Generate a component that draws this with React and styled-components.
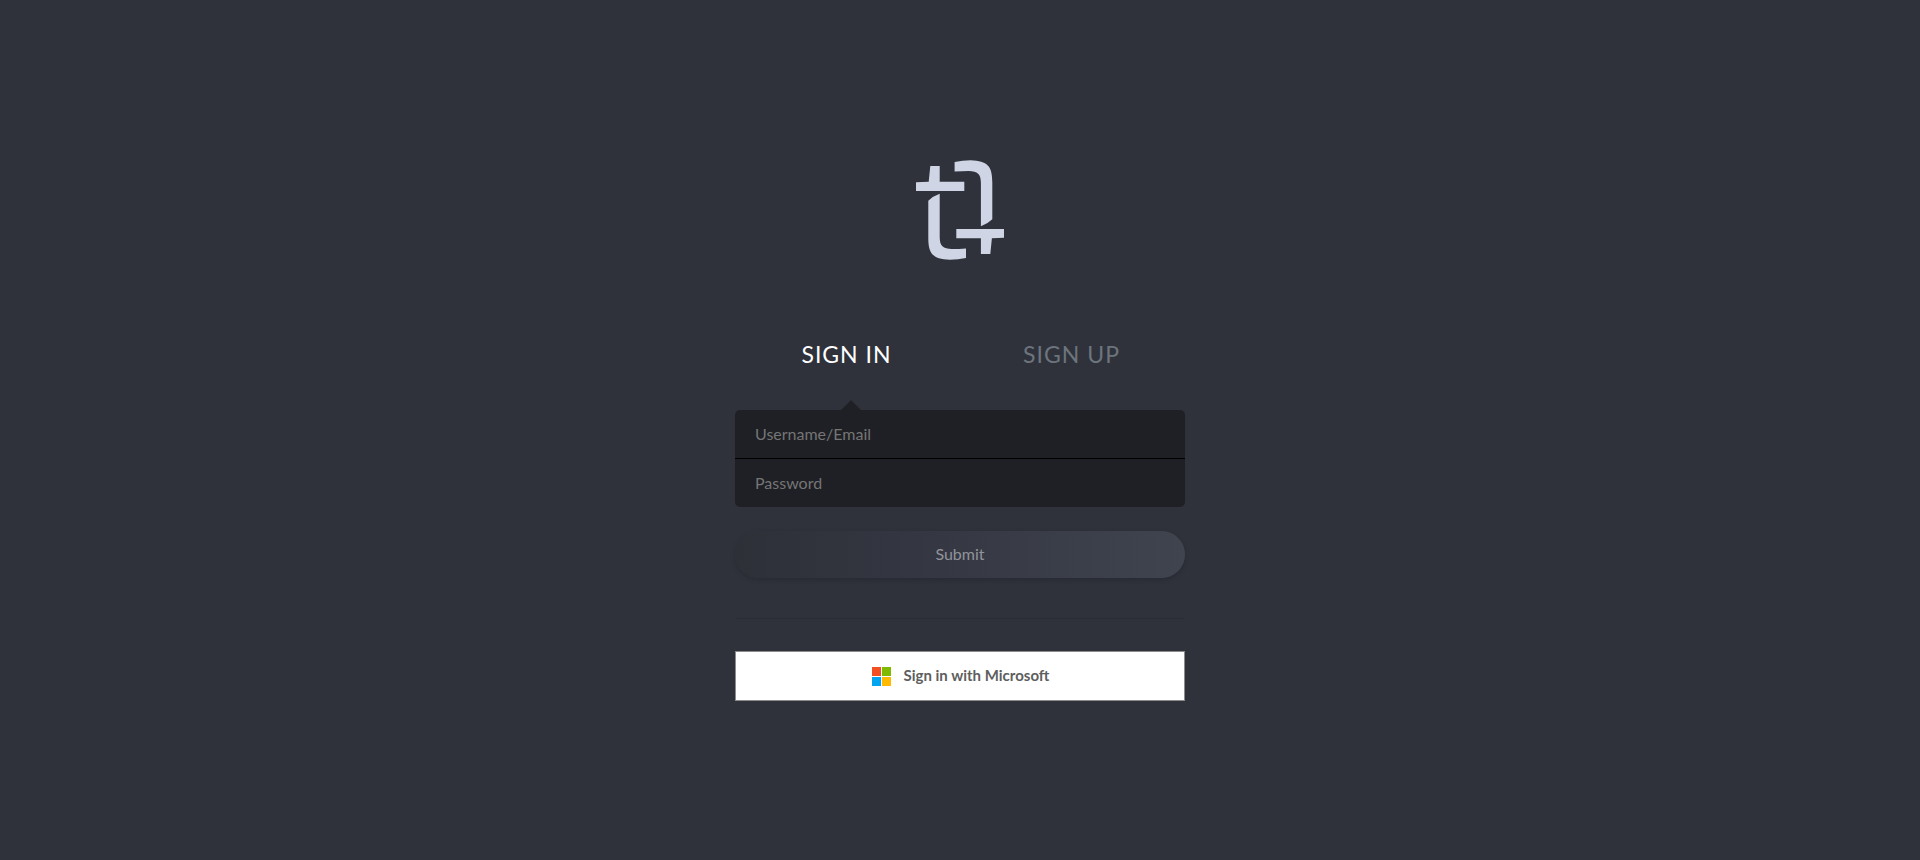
import React, { useState } from "react";
import styled, { createGlobalStyle } from "styled-components";

const GlobalStyle = createGlobalStyle`
  *, *::before, *::after { box-sizing: border-box; }
  body {
    margin: 0;
    background: #2f323b;
    font-family: Lato, "Liberation Sans", sans-serif;
  }
`;

const Page = styled.main`
  display: flex;
  flex-direction: column;
  align-items: center;
  justify-content: center;
  min-height: 100vh;
  padding-top: 1px;
`;

const Logo = styled.svg`
  display: block;
  width: 88px;
  height: 100px;
  margin-bottom: 75px;
  fill: #cfd5e4;
`;

const Content = styled.div`
  width: 100%;
  max-width: 450px;
`;

const Tabs = styled.nav`
  display: grid;
  grid-template-columns: 1fr 1fr;
  margin-bottom: 37px;
`;

const Tab = styled.button`
  height: 38px;
  padding: 0 2px 0 0;
  border: 0;
  background: none;
  color: ${({ $active }) => ($active ? "#ffffff" : "#6c757d")};
  font: inherit;
  font-size: 23px;
  line-height: 38px;
  letter-spacing: 1px;
  text-transform: uppercase;
  cursor: pointer;
`;

const Fields = styled.div`
  position: relative;
  margin-bottom: 24px;
  border-radius: 5px;
  background: #1f2025;

  &::before {
    content: "";
    position: absolute;
    bottom: 100%;
    left: ${({ $second }) => ($second ? "331px" : "106px")};
    border: 10px solid transparent;
    border-top: 0;
    border-bottom-color: #1f2025;
  }
`;

const Field = styled.input`
  display: block;
  width: 100%;
  height: 48px;
  padding: 0 20px 2px;
  border: 0;
  background: transparent;
  color: #ffffff;
  font: inherit;
  font-size: 16px;
  outline: none;

  & + & {
    height: 49px;
    border-top: 1px solid #000000;
  }

  &::placeholder {
    color: #757575;
  }
`;

const Submit = styled.button`
  display: block;
  width: 100%;
  height: 47px;
  padding: 0 0 2px;
  border: 0;
  border-radius: 24px;
  background: linear-gradient(90deg, #2d3037 0%, #353843 45%, #40444f 100%);
  box-shadow: 0 2px 5px rgba(0, 0, 0, 0.16);
  color: #92949a;
  font: inherit;
  font-size: 16px;
  cursor: pointer;
`;

const Divider = styled.hr`
  height: 1px;
  margin: 40px 0 32px;
  border: 0;
  background: #2a2d34;
`;

const ProviderButton = styled.button`
  display: flex;
  align-items: center;
  justify-content: center;
  gap: 13px;
  width: 100%;
  height: 50px;
  padding: 0 0 0 1px;
  border: 1px solid #8c8c8c;
  background: #ffffff;
  color: #5e5e5e;
  font: inherit;
  font-size: 15px;
  font-weight: 700;
  cursor: pointer;
`;

const ProviderIcon = styled.svg`
  width: 19px;
  height: 19px;
`;

const ProviderLabel = styled.span`
  padding-bottom: 2px;
`;

const glyph =
  "M0 22.3L12.7 21.7L14.3 6H23.7V21.7H48.3V31H0Z " +
  "M12.3 40.7Q17 36 23.7 33.7V77C23.7 86 27 88.8 36 89Q43 89 50 88.5V98Q42 99.8 34 99.8C17 99 12.3 94 12.3 78Z";

export default function App() {
  const [mode, setMode] = useState("in");
  return (
    <>
      <GlobalStyle />
      <Page>
        <Logo viewBox="0 0 88 100" aria-hidden="true">
          <path d={glyph} />
          <path d={glyph} transform="rotate(180 44.3 50)" />
        </Logo>
        <Content>
          <Tabs>
            <Tab type="button" $active={mode === "in"} onClick={() => setMode("in")}>
              Sign In
            </Tab>
            <Tab type="button" $active={mode === "up"} onClick={() => setMode("up")}>
              Sign Up
            </Tab>
          </Tabs>
          <form onSubmit={(event) => event.preventDefault()}>
            <Fields $second={mode === "up"}>
              <Field type="text" name="username" placeholder="Username/Email" aria-label="Username/Email" />
              <Field type="password" name="password" placeholder="Password" aria-label="Password" />
            </Fields>
            <Submit type="submit">Submit</Submit>
          </form>
          <Divider />
          <ProviderButton type="button">
            <ProviderIcon viewBox="0 0 19 19" aria-hidden="true">
              <path fill="#f25022" d="M0 0h9v9H0z" />
              <path fill="#7fba00" d="M10 0h9v9h-9z" />
              <path fill="#00a4ef" d="M0 10h9v9H0z" />
              <path fill="#ffb900" d="M10 10h9v9h-9z" />
            </ProviderIcon>
            <ProviderLabel>Sign in with Microsoft</ProviderLabel>
          </ProviderButton>
        </Content>
      </Page>
    </>
  );
}
